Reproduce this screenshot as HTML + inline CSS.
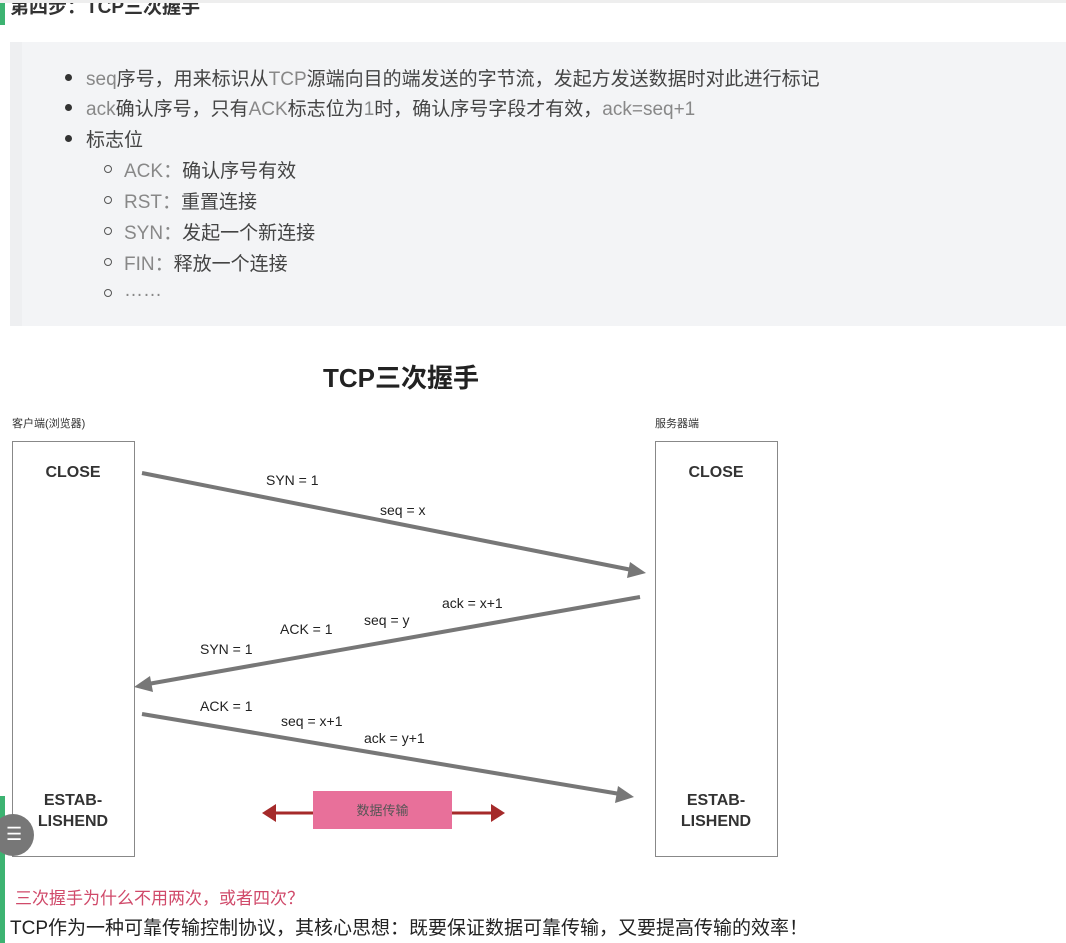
<!DOCTYPE html>
<html><head><meta charset="utf-8"><style>
body{margin:0;width:1066px;height:943px;background:#fff;position:relative;overflow:hidden;font-family:"Liberation Sans","Noto Sans CJK SC",sans-serif;color:#333}
.a{position:absolute;white-space:nowrap}
.box{position:absolute;border:1px solid #888;background:#fff}
.li{position:absolute;font-size:19px;color:#444;white-space:nowrap}
.li .e{color:#888}
.dot{position:absolute;width:7px;height:7px;border-radius:50%;background:#333}
.circ{position:absolute;width:6px;height:6px;border-radius:50%;border:1.5px solid #555}
.lab{position:absolute;font-size:14px;color:#222;white-space:nowrap}
.bold{position:absolute;font-weight:bold;font-size:16px;color:#333;text-align:center;width:122px;line-height:21px}
</style></head><body>
<div class="a" style="left:0;top:0;width:5px;height:25px;background:#3cb371"></div>
<div class="a" style="left:10px;top:-8px;font-size:19px;font-weight:bold;color:#333">第四步：TCP三次握手</div>
<div class="a" style="left:0;top:0;width:1066px;height:3px;background:#eee"></div>
<div class="a" style="left:10px;top:42px;width:1056px;height:284px;background:#f3f4f6"></div>
<div class="a" style="left:10px;top:42px;width:12px;height:284px;background:#eeeff1"></div>

<div class="dot" style="left:65px;top:74px"></div><div class="li" style="left:86px;top:64px"><span class="e">seq</span>序号，用来标识从<span class="e">TCP</span>源端向目的端发送的字节流，发起方发送数据时对此进行标记</div>
<div class="dot" style="left:65px;top:104px"></div><div class="li" style="left:86px;top:94px"><span class="e">ack</span>确认序号，只有<span class="e">ACK</span>标志位为<span class="e">1</span>时，确认序号字段才有效，<span class="e">ack=seq+1</span></div>
<div class="dot" style="left:65px;top:135px"></div><div class="li" style="left:86px;top:125px">标志位</div>
<div class="circ" style="left:104px;top:165px"></div><div class="li" style="left:124px;top:156px"><span class="e">ACK：</span>确认序号有效</div>
<div class="circ" style="left:104px;top:196px"></div><div class="li" style="left:124px;top:187px"><span class="e">RST：</span>重置连接</div>
<div class="circ" style="left:104px;top:227px"></div><div class="li" style="left:124px;top:218px"><span class="e">SYN：</span>发起一个新连接</div>
<div class="circ" style="left:104px;top:258px"></div><div class="li" style="left:124px;top:249px"><span class="e">FIN：</span>释放一个连接</div>
<div class="circ" style="left:104px;top:289px"></div><div class="li" style="left:124px;top:280px"><span class="e">……</span></div>

<div class="a" style="left:323px;top:358px;font-size:26px;font-weight:bold;color:#222">TCP三次握手</div>
<div class="a" style="left:12px;top:415px;font-size:11px;color:#333">客户端(浏览器)</div>
<div class="a" style="left:655px;top:415px;font-size:11px;color:#333">服务器端</div>
<div class="box" style="left:12px;top:441px;width:121px;height:414px"></div>
<div class="box" style="left:655px;top:441px;width:121px;height:414px"></div>
<div class="bold" style="left:12px;top:462px">CLOSE</div>
<div class="bold" style="left:655px;top:462px">CLOSE</div>
<div class="bold" style="left:12px;top:790px">ESTAB-<br>LISHEND</div>
<div class="bold" style="left:655px;top:790px">ESTAB-<br>LISHEND</div>

<svg class="a" style="left:0;top:0" width="1066" height="943">
<g stroke="#777" stroke-width="4" fill="#777">
<line x1="142" y1="473" x2="632" y2="570"/><polygon points="646,573 630,562 627,578" stroke="none"/>
<line x1="640" y1="597" x2="148" y2="684"/><polygon points="134,687 150,676 153,692" stroke="none"/>
<line x1="142" y1="714" x2="620" y2="794"/><polygon points="634,797 618,786 615,803" stroke="none"/>
</g>
<g stroke="#a52a2a" stroke-width="3" fill="#a52a2a">
<line x1="272" y1="813" x2="320" y2="813"/><polygon points="262,813 276,804 276,822" stroke="none"/>
<line x1="450" y1="813" x2="495" y2="813"/><polygon points="505,813 491,804 491,822" stroke="none"/>
</g>
<rect x="313" y="791" width="139" height="38" fill="#e8709a"/>
</svg>
<div class="a" style="left:313px;top:800px;width:139px;text-align:center;font-size:13px;color:#555">数据传输</div>
<div class="lab" style="left:266px;top:472px">SYN = 1</div>
<div class="lab" style="left:380px;top:502px">seq = x</div>
<div class="lab" style="left:442px;top:595px">ack = x+1</div>
<div class="lab" style="left:364px;top:612px">seq = y</div>
<div class="lab" style="left:280px;top:621px">ACK = 1</div>
<div class="lab" style="left:200px;top:641px">SYN = 1</div>
<div class="lab" style="left:200px;top:698px">ACK = 1</div>
<div class="lab" style="left:281px;top:713px">seq = x+1</div>
<div class="lab" style="left:364px;top:730px">ack = y+1</div>

<div class="a" style="left:0;top:796px;width:5px;height:147px;background:#3cb371"></div>
<div class="a" style="left:-8px;top:814px;width:42px;height:42px;border-radius:50%;background:#777"></div>
<div class="a" style="left:6px;top:825px;color:#fff;font-size:18px;line-height:18px">☰</div>
<div class="a" style="left:15px;top:884px;font-size:17px;color:#d04a6a">三次握手为什么不用两次，或者四次？</div>
<div class="a" style="left:10px;top:913px;font-size:19px;color:#222">TCP作为一种可靠传输控制协议，其核心思想：既要保证数据可靠传输，又要提高传输的效率！</div>
</body></html>
